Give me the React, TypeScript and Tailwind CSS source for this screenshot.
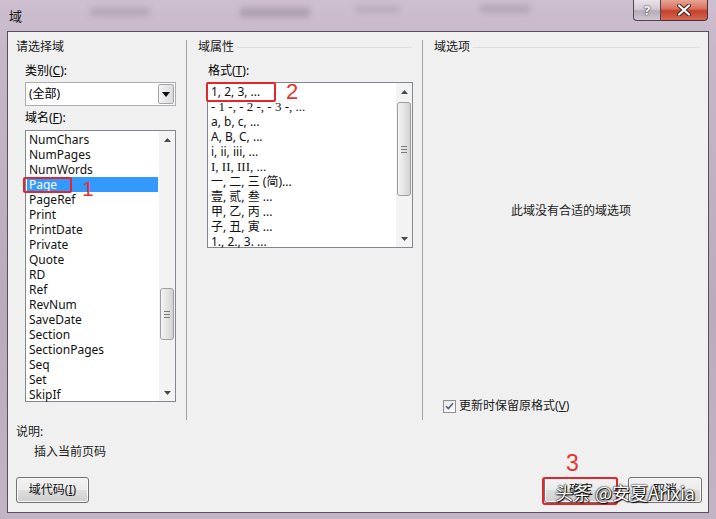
import React from "react";

const fieldNames = [
  "NumChars",
  "NumPages",
  "NumWords",
  "Page",
  "PageRef",
  "Print",
  "PrintDate",
  "Private",
  "Quote",
  "RD",
  "Ref",
  "RevNum",
  "SaveDate",
  "Section",
  "SectionPages",
  "Seq",
  "Set",
  "SkipIf",
];

const formats: { t: string; serif?: boolean }[] = [
  { t: "1, 2, 3, ..." },
  { t: "- 1 -, - 2 -, - 3 -, ...", serif: true },
  { t: "a, b, c, ..." },
  { t: "A, B, C, ..." },
  { t: "i, ii, iii, ..." },
  { t: "I, II, III, ...", serif: true },
  { t: "一, 二, 三 (简)..." },
  { t: "壹, 贰, 叁 ..." },
  { t: "甲, 乙, 丙 ..." },
  { t: "子, 丑, 寅 ..." },
  { t: "1., 2., 3. ..." },
];

function UpArrow() {
  return (
    <svg width="7" height="4" viewBox="0 0 7 4">
      <path d="M0 4 L3.5 0 L7 4 Z" fill="#4a4a4a" />
    </svg>
  );
}
function DownArrow() {
  return (
    <svg width="7" height="4" viewBox="0 0 7 4">
      <path d="M0 0 L3.5 4 L7 0 Z" fill="#4a4a4a" />
    </svg>
  );
}

function Scrollbar({ thumbClass }: { thumbClass: string }) {
  return (
    <div className="w-[16px] h-full flex flex-col bg-[#f3f3f3]">
      <div className="h-[17px] flex items-center justify-center">
        <UpArrow />
      </div>
      <div className="flex-1 flex flex-col px-[1px]">
        <div
          className={
            "rounded-[3px] border border-[#9e9e9e] bg-[linear-gradient(90deg,#f4f4f4,#e4e4e4_50%,#d2d2d2)] flex flex-col items-center justify-center gap-[2px] " +
            thumbClass
          }
        >
          <div className="w-[6px] h-px bg-[#7a7a7a]" />
          <div className="w-[6px] h-px bg-[#7a7a7a]" />
          <div className="w-[6px] h-px bg-[#7a7a7a]" />
        </div>
      </div>
      <div className="h-[17px] flex items-center justify-center">
        <DownArrow />
      </div>
    </div>
  );
}

function WinButton({ children, w }: { children: React.ReactNode; w: string }) {
  return (
    <div
      className={
        "h-[26px] rounded-[3px] border border-[#707070] bg-[linear-gradient(#f2f2f2_0%,#ebebeb_48%,#dddddd_52%,#cfcfcf_100%)] shadow-[inset_0_0_0_1px_#fbfbfb] flex items-center justify-center text-[12px] text-[#111] " +
        w
      }
    >
      {children}
    </div>
  );
}

function GroupHeader({ label, mr }: { label: string; mr: string }) {
  return (
    <div className={"h-[14px] flex items-center gap-[3px] " + mr}>
      <span className="leading-[14px] text-[#1a1a1a]">{label}</span>
      <div className="flex-1 h-px bg-[#d8dde2]" />
    </div>
  );
}

export default function App() {
  return (
    <div className="w-[716px] h-[519px] relative overflow-hidden flex flex-col bg-[linear-gradient(180deg,#cdbfcf_0%,#c6b7c8_10%,#b9abbb_60%,#c2b4c4_100%)] font-['Noto_Sans','Noto_Sans_CJK_SC',sans-serif] text-[12px] text-black">
      {/* faint blurred background from the glass */}
      <div className="absolute left-[90px] top-[8px] w-[60px] h-[8px] bg-[#8c8090] opacity-40 blur-[3px]" />
      <div className="absolute left-[240px] top-[8px] w-[70px] h-[9px] bg-[#7c7080] opacity-40 blur-[3px]" />
      <div className="absolute left-[480px] top-[5px] w-[50px] h-[8px] bg-[#8c8090] opacity-40 blur-[3px]" />
      <div className="absolute left-[770px] top-[5px] w-[60px] h-[8px] bg-[#8c8090] opacity-40 blur-[3px]" />
      <div className="absolute left-[355px] top-[6px] w-[45px] h-[7px] bg-[#8c8090] opacity-30 blur-[3px]" />

      {/* title bar */}
      <div className="h-[31px] flex items-start justify-between pl-[9px] pr-[8px] relative">
        <div className="pt-[8px] text-[13px] leading-[16px] text-[#151515]">域</div>
        <div className="flex">
          <div className="w-[28px] h-[21px] rounded-bl-[4px] border border-t-0 border-[#4f4652] bg-[linear-gradient(#e9e3ea_0%,#d3cad5_45%,#b6abb8_55%,#cfc6d1_100%)] flex items-center justify-center">
            <span className="text-[13px] font-bold leading-none text-white [text-shadow:0_0_1px_#333,0_0_2px_#333]">?</span>
          </div>
          <div className="w-[47px] h-[21px] rounded-br-[4px] border border-l-0 border-t-0 border-[#4f3036] bg-[linear-gradient(#e6a495_0%,#d9735f_42%,#c5412b_55%,#d5684f_100%)] flex items-center justify-center">
            <svg width="14" height="12" viewBox="0 0 14 12">
              <path d="M2 1.5 L12 10.5 M12 1.5 L2 10.5" stroke="#3a2020" strokeWidth="4" strokeLinecap="round" />
              <path d="M2 1.5 L12 10.5 M12 1.5 L2 10.5" stroke="#ffffff" strokeWidth="2.2" strokeLinecap="round" />
            </svg>
          </div>
        </div>
      </div>

      {/* dialog body */}
      <div className="mx-[7px] mb-[6px] flex-1 border border-[#54505a] bg-[#f0f0f0] flex flex-col">
        <div className="mt-[8px] h-[380px] flex">
          {/* column 1 */}
          <div className="w-[179px] border-r border-[#a3a3a3] pl-[8px] flex flex-col">
            <div className="h-[14px] leading-[14px] text-[#1a1a1a]">请选择域</div>
            <div className="ml-[9px] w-[151px] flex flex-col">
              <div className="mt-[10px] h-[14px] leading-[14px]">
                类别(<span className="underline">C</span>):
              </div>
              <div className="mt-[4px] h-[24px] border border-[#abadb3] bg-white flex">
                <div className="flex-1 pl-[3px] leading-[22px]">(全部)</div>
                <div className="w-[16px] m-[1px] border border-[#a5a5a5] rounded-[2px] bg-[linear-gradient(90deg,#f3f3f3,#dcdcdc)] flex items-center justify-center">
                  <svg width="8" height="5" viewBox="0 0 8 5">
                    <path d="M0 0 L4 5 L8 0 Z" fill="#111" />
                  </svg>
                </div>
              </div>
              <div className="mt-[5px] h-[14px] leading-[14px]">
                域名(<span className="underline">F</span>):
              </div>
              <div className="mt-[5px] h-[272px] border border-[#828790] bg-white flex">
                <div className="flex-1 pt-[1px] px-[1px] flex flex-col">
                  {fieldNames.map((n) => (
                    <div
                      key={n}
                      className={
                        "h-[15px] leading-[15px] pl-[2px] " +
                        (n === "Page" ? "bg-[#3399ff] text-white" : "text-[#111]")
                      }
                    >
                      {n}
                    </div>
                  ))}
                </div>
                <Scrollbar thumbClass="mt-[140px] h-[52px]" />
              </div>
            </div>
          </div>

          {/* column 2 */}
          <div className="w-[236px] border-r border-[#a3a3a3] pl-[11px] flex flex-col">
            <GroupHeader label="域属性" mr="mr-[10px]" />
            <div className="ml-[10px] mt-[10px] h-[14px] leading-[14px]">
              格式(<span className="underline">T</span>):
            </div>
            <div className="ml-[9px] mt-[4px] w-[206px] h-[166px] border border-[#828790] bg-white flex">
              <div className="flex-1 pt-[1px] pl-[3px] flex flex-col">
                {formats.map((f) => (
                  <div
                    key={f.t}
                    className={
                      "h-[15px] leading-[15px] text-[#111] whitespace-nowrap " +
                      (f.serif ? "font-['Liberation_Serif','Noto_Sans_CJK_SC',serif] text-[13px]" : "")
                    }
                  >
                    {f.t}
                  </div>
                ))}
              </div>
              <Scrollbar thumbClass="mt-[2px] h-[94px]" />
            </div>
          </div>

          {/* column 3 */}
          <div className="flex-1 pl-[11px] flex flex-col">
            <GroupHeader label="域选项" mr="mr-[8px]" />
            <div className="mt-[150px] h-[14px] leading-[14px] text-center text-[#1a1a1a]">
              此域没有合适的域选项
            </div>
            <div className="mt-auto mb-[7px] ml-[9px] flex items-center gap-[3px]">
              <div className="w-[13px] h-[13px] border border-[#8e8f8f] bg-[linear-gradient(135deg,#e6e6e6,#ffffff)] flex items-center justify-center">
                <svg width="9" height="8" viewBox="0 0 9 8">
                  <path d="M1 4.2 L3.4 6.6 L8 1.2" stroke="#4a5f80" strokeWidth="1.6" fill="none" />
                </svg>
              </div>
              <span className="leading-[14px] text-[#1a1a1a]">
                更新时保留原格式(<span className="underline">V</span>)
              </span>
            </div>
          </div>
        </div>

        {/* description */}
        <div className="ml-[8px] mt-[5px] h-[14px] leading-[14px] text-[#1a1a1a]">说明:</div>
        <div className="ml-[26px] mt-[6px] h-[14px] leading-[14px] text-[#1a1a1a]">插入当前页码</div>

        {/* buttons */}
        <div className="mt-[18px] pl-[8px] pr-[6px] flex items-center">
          <WinButton w="w-[73px]">
            域代码(<span className="underline">I</span>)
          </WinButton>
          <div className="flex-1" />
          <WinButton w="w-[74px]">确定</WinButton>
          <div className="w-[10px]" />
          <WinButton w="w-[74px]">取消</WinButton>
        </div>
      </div>

      {/* annotations */}
      <div className="absolute left-[23px] top-[177px] w-[49px] h-[16px] border-2 border-[#e3262b] rounded-[2px]" />
      <div className="absolute left-[82px] top-[177px] text-[21px] leading-[24px] text-[#e8332f] font-['Liberation_Sans',sans-serif]">1</div>
      <div className="absolute left-[206px] top-[82px] w-[70px] h-[20px] border-2 border-[#e3262b] rounded-[2px]" />
      <div className="absolute left-[286px] top-[80px] text-[22px] leading-[24px] text-[#e8332f] font-['Liberation_Sans',sans-serif]">2</div>
      <div className="absolute left-[566px] top-[450px] text-[23px] leading-[26px] text-[#e8332f] font-['Liberation_Sans',sans-serif]">3</div>
      <div className="absolute left-[542px] top-[477px] w-[76px] h-[28px] border-2 border-[#e3262b] rounded-[3px]" />

      {/* watermark */}
      <div className="absolute left-[555px] top-[481px] text-[18px] leading-[22px] text-white whitespace-nowrap font-['Noto_Sans_CJK_SC','Noto_Sans',sans-serif] [text-shadow:0_0_1px_#000,0_0_2px_#000,1px_1px_1px_#000]">
        头条 @安夏Arixia
      </div>
    </div>
  );
}
